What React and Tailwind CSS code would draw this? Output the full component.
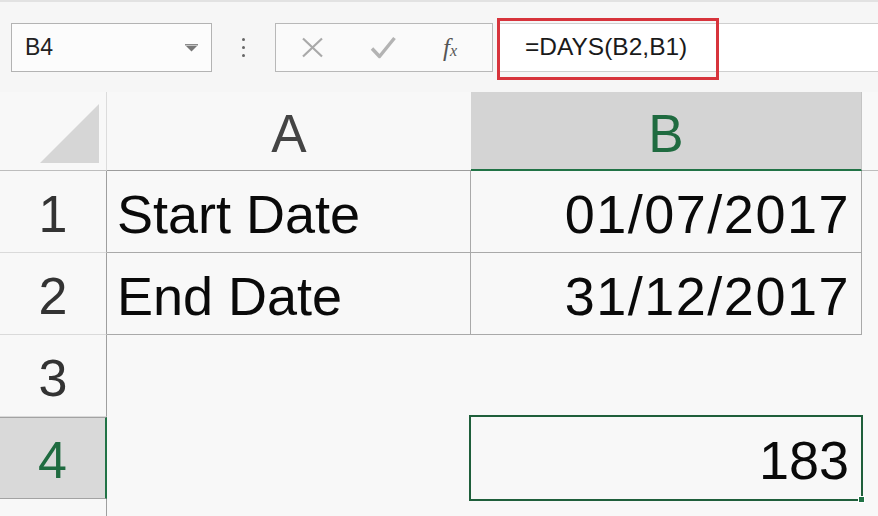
import React from 'react';

const cellText = "text-[54px] leading-none text-[#0a0a0a]";

function RowHead({ n, active }) {
  if (active) {
    return (
      <div className="flex items-center justify-center bg-[#d9d9d9] border-t border-b border-[#a3a3a3] border-r-2 border-r-[#217346] text-[52px] text-[#1f6b40] pt-[4px]">
        {n}
      </div>
    );
  }
  return (
    <div className="flex items-center justify-center border-r border-r-[#9f9f9f] border-b border-b-[#dadada] text-[52px] text-[#333] pt-[4px]">
      {n}
    </div>
  );
}

export default function App() {
  return (
    <div className="w-[878px] h-[516px] overflow-hidden bg-[#f8f8f8] border-t-2 border-[#e2e2e2] font-['Liberation_Sans',sans-serif]">
      {/* formula bar */}
      <div className="h-[90px] flex items-start pt-[21px] bg-[#f6f6f6]">
        <div className="ml-[11px] w-[201px] h-[49px] border border-[#b3b3b3] bg-[#fcfcfc] flex items-center justify-between pl-[13px] pr-[13px]">
          <span className="text-[23px] text-[#222]">B4</span>
          <svg width="13" height="8" viewBox="0 0 13 8">
            <rect x="0" y="0" width="13" height="1.5" fill="#8a8a8a" />
            <path d="M1 2 L12 2 L6.5 7.5 Z" fill="#777" />
          </svg>
        </div>
        <div className="w-[63px] h-[49px] flex flex-col items-center justify-center gap-[5px]">
          <span className="w-[3px] h-[3px] rounded-full bg-[#666]" />
          <span className="w-[3px] h-[3px] rounded-full bg-[#666]" />
          <span className="w-[3px] h-[3px] rounded-full bg-[#666]" />
        </div>
        <div className="w-[218px] h-[49px] border border-[#b8b8b8] bg-[#fafafa] flex items-center">
          <svg className="ml-[25px]" width="23" height="21" viewBox="0 0 23 21">
            <path d="M2 1.5 L21 19.5 M21 1.5 L2 19.5" stroke="#a9a9a9" strokeWidth="2.2" fill="none" />
          </svg>
          <svg className="ml-[46px]" width="26" height="23" viewBox="0 0 26 23">
            <path d="M2 12.5 L9.5 20.5 L24.5 2" stroke="#b3b3b3" strokeWidth="3.4" strokeLinejoin="round" fill="none" />
          </svg>
          <span className="ml-[47px] font-['Liberation_Serif',serif] italic text-[#555] text-[25px] leading-none">
            f<span className="text-[16px]">x</span>
          </span>
        </div>
        <div className="relative ml-[4px] flex-1 h-[49px] border border-r-0 border-[#cfcfcf] bg-white flex items-center">
          <span className="pl-[27px] text-[24.5px] text-[#1a1a1a]">=DAYS(B2,B1)</span>
          <div className="absolute -left-[1px] -top-[6px] w-[222px] h-[62px] border-[3px] border-[#d7343c]" />
        </div>
      </div>

      {/* sheet */}
      <div className="grid grid-cols-[107px_364px_391px_1fr] grid-rows-[79px_82px_82px_82px_82px_1fr] h-[424px]">
        {/* header row */}
        <div className="border-r border-r-[#dcdcdc] border-b border-b-[#bdbdbd] flex items-start">
          <svg width="106" height="78" viewBox="0 0 106 78">
            <path d="M40 71 L99 71 L99 12 Z" fill="#d6d6d6" />
          </svg>
        </div>
        <div className="border-b border-b-[#9c9c9c] flex items-center justify-center text-[53px] text-[#444] pt-[6px]">
          A
        </div>
        <div className="bg-[#d4d4d4] border-b-2 border-b-[#217346] border-r border-r-[#c4c4c4] flex items-center justify-center text-[53px] text-[#1f6b40] pt-[6px]">
          B
        </div>
        <div className="border-b border-b-[#bdbdbd]" />

        {/* row 1 */}
        <RowHead n="1" />
        <div className={`border-r border-b border-[#a9a9a9] flex items-center pl-[10px] pt-[4px] ${cellText}`}>
          Start Date
        </div>
        <div className={`border-r border-b border-[#a9a9a9] flex items-center justify-end pr-[11px] pt-[4px] tracking-[1.5px] ${cellText}`}>
          01/07/2017
        </div>
        <div />

        {/* row 2 */}
        <RowHead n="2" />
        <div className={`border-r border-b border-[#a9a9a9] flex items-center pl-[10px] pt-[4px] ${cellText}`}>
          End Date
        </div>
        <div className={`border-r border-b border-[#a9a9a9] flex items-center justify-end pr-[11px] pt-[4px] tracking-[1.5px] ${cellText}`}>
          31/12/2017
        </div>
        <div />

        {/* row 3 */}
        <RowHead n="3" />
        <div />
        <div />
        <div />

        {/* row 4 */}
        <RowHead n="4" active />
        <div />
        <div className={`relative flex items-center justify-end pr-[13px] pt-[4px] ${cellText}`}>
          183
          <div className="absolute -left-[2px] -top-[2px] -right-[1px] -bottom-[2px] border-2 border-[#1f5f3b]" />
          <div className="absolute -right-[3px] -bottom-[4px] w-[7px] h-[7px] bg-[#217346] border border-white" />
        </div>
        <div />

        {/* row 5 partial */}
        <div className="border-r border-r-[#9f9f9f]" />
        <div />
        <div />
        <div />
      </div>
    </div>
  );
}
